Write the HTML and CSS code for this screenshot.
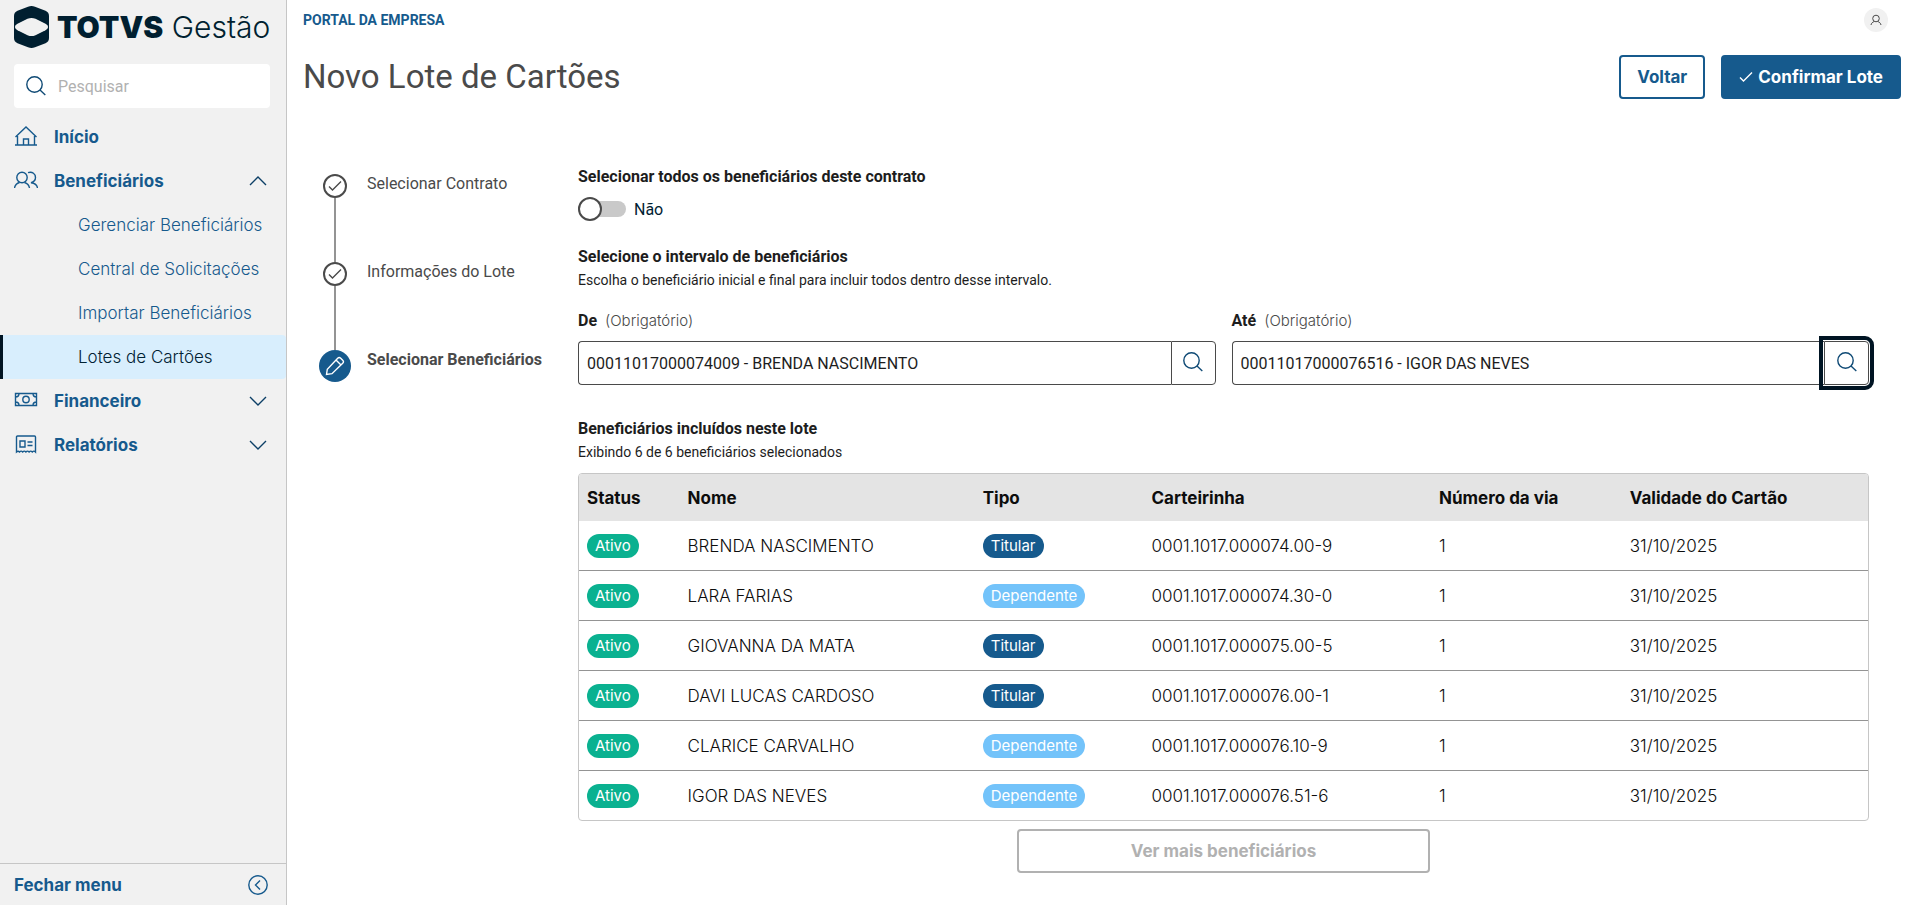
FILE: index.html
```html
<!DOCTYPE html>
<html lang="pt-BR">
<head>
    <meta charset="UTF-8">
    <meta name="viewport" content="width=device-width, initial-scale=1.0">
    <title>Novo Lote de Cartões</title>
    <link rel="stylesheet" href="styles.css">
</head>
<body>
    <aside class="sidebar">
        <a class="logo" href="#">
            <svg width="35" height="42" viewBox="0 0 35 42" aria-hidden="true">
                <path fill="#001f30" d="M14 .8Q17.500-.8 21 .8L31.500 4.800Q35 6.300 35 10V32Q35 35.700 31.500 37.200L21 41.200Q17.500 42.800 14 41.200L3.500 37.200Q0 35.700 0 32V10Q0 6.300 3.500 4.800Z"/>
                <path fill="#f1f1f1" d="M1 21C1 19.500 2 18.600 3.500 17.800L13.500 12.800Q17.500 11 21.500 12.800L31.500 17.800C33 18.600 34 19.500 34 21S33 23.400 31.500 24.200L21.500 29.200Q17.500 31 13.500 29.200L3.500 24.200C2 23.400 1 22.500 1 21Z"/>
            </svg>
            <span class="logo-text"><strong>TOTVS</strong> Gestão</span>
        </a>

        <div class="search">
            <svg class="icon" width="20" height="20" viewBox="0 0 20 20" aria-hidden="true"><circle cx="8.500" cy="8.500" r="7.700"/><path d="M14 14l5.300 5"/></svg>
            <input type="text" placeholder="Pesquisar" aria-label="Pesquisar">
        </div>

        <nav class="menu">
            <a class="menu-item" href="#">
                <svg class="icon" width="24" height="24" viewBox="0 0 24 24" aria-hidden="true"><path d="M1 20h22M3.500 20v-9M20.500 20v-9M1.500 12L12 2l10.500 10M9.500 20v-6h5v6"/></svg>
                <span>Início</span>
            </a>
            <a class="menu-item" href="#">
                <svg class="icon" width="24" height="24" viewBox="0 0 24 24" aria-hidden="true"><circle cx="8" cy="8.500" r="5.200"/><path d="M.5 19c.5-3 2.500-4.700 5-5.500M15.500 19c-.5-3-2.500-4.700-5-5.500M14 3.700c4.500-1.400 7.500 1.400 7.500 4.800 0 3-2 4.500-4.500 5.200 3.500.4 6 2 6.500 5.300"/></svg>
                <span>Beneficiários</span>
                <svg class="icon arrow" width="18" height="10" viewBox="0 0 18 10" aria-hidden="true"><path d="M1 9l8-8 8 8"/></svg>
            </a>
            <a class="submenu-item" href="#">Gerenciar Beneficiários</a>
            <a class="submenu-item" href="#">Central de Solicitações</a>
            <a class="submenu-item" href="#">Importar Beneficiários</a>
            <a class="submenu-item active" href="#">Lotes de Cartões</a>
            <a class="menu-item" href="#">
                <svg class="icon" width="24" height="24" viewBox="0 0 24 24" aria-hidden="true"><path d="M1.500 4.500h21v12h-21zM1.500 8c2 0 3.500-1.500 3.500-3.500M22.500 8c-2 0-3.500-1.500-3.500-3.500M1.500 13c2 0 3.500 1.500 3.500 3.500M22.500 13c-2 0-3.500 1.500-3.500 3.500"/><circle cx="12" cy="10.500" r="3.200"/></svg>
                <span>Financeiro</span>
                <svg class="icon arrow" width="18" height="10" viewBox="0 0 18 10" aria-hidden="true"><path d="M1 1l8 8 8-8"/></svg>
            </a>
            <a class="menu-item" href="#">
                <svg class="icon" width="24" height="24" viewBox="0 0 24 24" aria-hidden="true"><path d="M2.500 19v-15q0-1 1-1h17q1 0 1 1v15q-1.600-1.800-3.200 0-1.600-1.800-3.200 0-1.600-1.800-3.200 0-1.600-1.800-3.200 0-1.600-1.800-3.200 0-1.400-1.500-3 0zM6 8h5v6h-5zM13.500 9h5M13.500 12.500h5"/></svg>
                <span>Relatórios</span>
                <svg class="icon arrow" width="18" height="10" viewBox="0 0 18 10" aria-hidden="true"><path d="M1 1l8 8 8-8"/></svg>
            </a>
        </nav>

        <button class="close-menu" type="button">
            <span>Fechar menu</span>
            <svg class="icon" width="20" height="20" viewBox="0 0 20 20" aria-hidden="true"><circle cx="10" cy="10" r="9.200"/><path d="M12 5.500L7.500 10l4.500 4.500"/></svg>
        </button>
    </aside>

    <main class="page">
        <div class="topbar">
            <span class="portal">PORTAL DA EMPRESA</span>
            <button class="avatar" type="button" aria-label="Perfil">
                <svg class="icon" width="12" height="12" viewBox="0 0 12 12" aria-hidden="true"><circle cx="6" cy="4.500" r="3.300"/><path d="M1 11c.3-1.800 1.700-3 3.300-3.500M11 11c-.3-1.800-1.700-3-3.300-3.500"/></svg>
            </button>
        </div>

        <header class="page-header">
            <h1>Novo Lote de Cartões</h1>
            <div class="actions">
                <button class="btn btn-secondary" type="button">Voltar</button>
                <button class="btn btn-primary" type="button">
                    <svg class="icon" width="14" height="12" viewBox="0 0 14 12" aria-hidden="true"><path d="M1 6.500L4.500 10 13 1.500"/></svg>
                    Confirmar Lote
                </button>
            </div>
        </header>

        <div class="content">
            <ol class="stepper">
                <li class="step">
                    <div class="marker">
                        <span class="circle"><svg class="icon" width="14" height="12" viewBox="0 0 14 12" aria-hidden="true"><path d="M1 6.500L4.500 10 13 1.500"/></svg></span>
                    </div>
                    <span class="step-label">Selecionar Contrato</span>
                </li>
                <li class="step">
                    <div class="marker">
                        <span class="circle"><svg class="icon" width="14" height="12" viewBox="0 0 14 12" aria-hidden="true"><path d="M1 6.500L4.500 10 13 1.500"/></svg></span>
                    </div>
                    <span class="step-label">Informações do Lote</span>
                </li>
                <li class="step current">
                    <div class="marker">
                        <span class="circle"><svg class="icon" width="20" height="20" viewBox="0 0 20 20" aria-hidden="true"><path d="M1.500 18.500l.8-5.300L12.700 2.300q1.500-1.500 3 0l2 2q1.500 1.500 0 3L7 17.700zM11 4l5 5"/></svg></span>
                    </div>
                    <span class="step-label">Selecionar Beneficiários</span>
                </li>
            </ol>

            <div class="form">
                <h2>Selecionar todos os beneficiários deste contrato</h2>
                <label class="switch">
                    <input type="checkbox">
                    <span>Não</span>
                </label>

                <h2>Selecione o intervalo de beneficiários</h2>
                <p>Escolha o beneficiário inicial e final para incluir todos dentro desse intervalo.</p>

                <div class="fields">
                    <div class="field">
                        <label for="de">De <small>(Obrigatório)</small></label>
                        <div class="lookup">
                            <input type="text" id="de" value="00011017000074009 - BRENDA NASCIMENTO">
                            <button type="button" aria-label="Buscar beneficiário inicial">
                                <svg class="icon" width="20" height="20" viewBox="0 0 20 20" aria-hidden="true"><circle cx="8.500" cy="8.500" r="7.700"/><path d="M14 14l5.300 5"/></svg>
                            </button>
                        </div>
                    </div>
                    <div class="field">
                        <label for="ate">Até <small>(Obrigatório)</small></label>
                        <div class="lookup">
                            <input type="text" id="ate" value="00011017000076516 - IGOR DAS NEVES">
                            <button class="focused" type="button" aria-label="Buscar beneficiário final">
                                <svg class="icon" width="20" height="20" viewBox="0 0 20 20" aria-hidden="true"><circle cx="8.500" cy="8.500" r="7.700"/><path d="M14 14l5.300 5"/></svg>
                            </button>
                        </div>
                    </div>
                </div>

                <h2>Beneficiários incluídos neste lote</h2>
                <p>Exibindo 6 de 6 beneficiários selecionados</p>

                <div class="table-box">
                    <table>
                        <colgroup>
                            <col class="col-status">
                            <col class="col-nome">
                            <col class="col-tipo">
                            <col class="col-carteirinha">
                            <col class="col-via">
                            <col class="col-validade">
                        </colgroup>
                        <thead>
                            <tr>
                                <th>Status</th>
                                <th>Nome</th>
                                <th>Tipo</th>
                                <th>Carteirinha</th>
                                <th>Número da via</th>
                                <th>Validade do Cartão</th>
                            </tr>
                        </thead>
                        <tbody>
                            <tr>
                                <td><span class="tag ativo">Ativo</span></td>
                                <td>BRENDA NASCIMENTO</td>
                                <td><span class="tag titular">Titular</span></td>
                                <td>0001.1017.000074.00-9</td>
                                <td>1</td>
                                <td>31/10/2025</td>
                            </tr>
                            <tr>
                                <td><span class="tag ativo">Ativo</span></td>
                                <td>LARA FARIAS</td>
                                <td><span class="tag dependente">Dependente</span></td>
                                <td>0001.1017.000074.30-0</td>
                                <td>1</td>
                                <td>31/10/2025</td>
                            </tr>
                            <tr>
                                <td><span class="tag ativo">Ativo</span></td>
                                <td>GIOVANNA DA MATA</td>
                                <td><span class="tag titular">Titular</span></td>
                                <td>0001.1017.000075.00-5</td>
                                <td>1</td>
                                <td>31/10/2025</td>
                            </tr>
                            <tr>
                                <td><span class="tag ativo">Ativo</span></td>
                                <td>DAVI LUCAS CARDOSO</td>
                                <td><span class="tag titular">Titular</span></td>
                                <td>0001.1017.000076.00-1</td>
                                <td>1</td>
                                <td>31/10/2025</td>
                            </tr>
                            <tr>
                                <td><span class="tag ativo">Ativo</span></td>
                                <td>CLARICE CARVALHO</td>
                                <td><span class="tag dependente">Dependente</span></td>
                                <td>0001.1017.000076.10-9</td>
                                <td>1</td>
                                <td>31/10/2025</td>
                            </tr>
                            <tr>
                                <td><span class="tag ativo">Ativo</span></td>
                                <td>IGOR DAS NEVES</td>
                                <td><span class="tag dependente">Dependente</span></td>
                                <td>0001.1017.000076.51-6</td>
                                <td>1</td>
                                <td>31/10/2025</td>
                            </tr>
                        </tbody>
                    </table>
                </div>

                <button class="btn btn-more" type="button" disabled>Ver mais beneficiários</button>
            </div>
        </div>
    </main>
</body>
</html>
```
FILE: styles.css
```css
*, *::before, *::after {
    margin: 0;
    padding: 0;
    box-sizing: border-box;
}

body {
    display: flex;
    min-height: 100vh;
    font-family: Roboto, sans-serif;
    font-size: 16px;
    color: #1d1d1d;
    background-color: #fff;
}

a {
    text-decoration: none;
}

button, input {
    font-family: inherit;
    font-size: 16px;
}

button {
    cursor: pointer;
}

.icon {
    flex: none;
    fill: none;
    stroke: currentColor;
    stroke-width: 1.4;
}

/* Menu lateral */
.sidebar {
    display: flex;
    flex-direction: column;
    flex: none;
    width: 287px;
    background-color: #f1f1f1;
    border-right: 1px solid #c6c6c6;
    font-family: Inter, sans-serif;
    font-size: 17px;
}

.logo {
    display: flex;
    align-items: center;
    gap: 8px;
    padding: 6px 14px 0;
    color: #001f30;
}

.logo-text {
    font-size: 30px;
    line-height: 42px;
    font-weight: 300;
    white-space: nowrap;
}

.logo-text strong {
    font-weight: 900;
}

.search {
    display: flex;
    align-items: center;
    gap: 12px;
    height: 44px;
    margin: 16px 16px 7px 14px;
    padding: 0 12px;
    background-color: #fff;
    border-radius: 4px;
    color: #0f4a75;
}

.search input {
    flex: 1;
    min-width: 0;
    border: none;
    outline: none;
    font-family: Roboto, sans-serif;
}

.search input::placeholder {
    color: #b1b1b1;
}

.menu {
    flex: 1;
}

.menu-item {
    display: flex;
    align-items: center;
    gap: 16px;
    height: 44px;
    padding: 0 19px 0 14px;
    color: #165a8d;
    font-weight: 700;
}

.menu-item .arrow {
    margin-left: auto;
    color: #0c3f66;
}

.submenu-item {
    display: block;
    height: 44px;
    padding-left: 78px;
    line-height: 44px;
    font-weight: 300;
    color: #165a8d;
}

.submenu-item.active {
    padding-left: 75px;
    border-left: 3px solid #001423;
    border-radius: 0 4px 4px 0;
    background-color: #d8eefd;
    color: #002233;
}

.close-menu {
    display: flex;
    align-items: center;
    justify-content: space-between;
    height: 42px;
    padding: 0 18px 0 14px;
    border: none;
    border-top: 1px solid #c6c6c6;
    background: none;
    color: #165a8d;
    font-size: 17px;
    font-weight: 700;
}

/* Cabeçalho */
.page {
    flex: 1;
    min-width: 0;
    padding: 8px 14px 16px 16px;
}

.topbar {
    display: flex;
    align-items: center;
    justify-content: space-between;
    height: 24px;
    padding-right: 13px;
}

.portal {
    font-size: 14px;
    font-weight: 700;
    color: #165a8d;
}

.avatar {
    display: flex;
    align-items: center;
    justify-content: center;
    width: 24px;
    height: 24px;
    border: none;
    border-radius: 50%;
    background-color: #f1f1f1;
    color: #4a4a4a;
}

.avatar .icon {
    stroke-width: 1;
}

.page-header {
    display: flex;
    align-items: center;
    justify-content: space-between;
    margin-top: 23px;
}

h1 {
    font-size: 33px;
    line-height: 44px;
    font-weight: 400;
    color: #4a4a4a;
}

.actions {
    display: flex;
    gap: 16px;
}

.btn {
    height: 44px;
    padding: 0 16px;
    border: 2px solid #165a8d;
    border-radius: 4px;
    font-family: Inter, sans-serif;
    font-size: 17px;
    font-weight: 700;
}

.btn-secondary {
    background-color: #fff;
    color: #165a8d;
}

.btn-primary {
    display: flex;
    align-items: center;
    gap: 5px;
    background-color: #165a8d;
    color: #fff;
}

.content {
    display: flex;
    margin-top: 66px;
}

/* Etapas */
.stepper {
    flex: none;
    width: 275px;
    padding: 9px 0 0 16px;
    list-style: none;
    color: #4a4a4a;
}

.step {
    display: flex;
    gap: 16px;
    min-height: 88px;
}

.marker {
    display: flex;
    flex-direction: column;
    align-items: center;
    width: 32px;
}

.marker::after {
    content: "";
    flex: 1;
    width: 2px;
    background-color: #949494;
}

.circle {
    display: flex;
    align-items: center;
    justify-content: center;
    width: 24px;
    height: 24px;
    border: 2px solid #4a4a4a;
    border-radius: 50%;
}

.step-label {
    line-height: 20px;
}

.current .marker::after {
    display: none;
}

.current .circle {
    width: 32px;
    height: 32px;
    border: none;
    background-color: #165a8d;
    color: #fff;
}

.current .step-label {
    font-weight: 700;
}

/* Formulário */
.form {
    flex: 1;
    min-width: 0;
    margin-right: 32px;
}

h2 {
    font-size: 16px;
    line-height: 24px;
    font-weight: 700;
}

.form p {
    font-size: 14px;
    line-height: 22px;
}

.switch {
    display: flex;
    align-items: center;
    gap: 8px;
    height: 24px;
    margin: 8px 0 24px;
    color: #002233;
}

.switch input {
    position: relative;
    appearance: none;
    width: 48px;
    height: 16px;
    border-radius: 8px;
    background-color: #c9c9c9;
}

.switch input::before {
    content: "";
    position: absolute;
    top: -4px;
    left: 0;
    width: 24px;
    height: 24px;
    border: 2px solid #4a4a4a;
    border-radius: 50%;
    background-color: #fff;
}

.switch input:checked::before {
    left: 24px;
}

.fields {
    display: flex;
    gap: 16px;
    margin: 18px 0 32px;
}

.field {
    flex: 1;
    min-width: 0;
}

.field label {
    display: block;
    margin-bottom: 8px;
    line-height: 24px;
    font-weight: 700;
}

.field small {
    margin-left: 4px;
    font-family: Inter, sans-serif;
    font-size: 15px;
    font-weight: 300;
    color: #4a4a4a;
}

.lookup {
    display: flex;
    height: 44px;
}

.lookup input {
    flex: 1;
    min-width: 0;
    padding: 0 8px;
    border: 1px solid #4a4a4a;
    border-right: none;
    border-radius: 4px 0 0 4px;
    outline: none;
    color: #1d1d1d;
}

.lookup button {
    display: flex;
    align-items: center;
    justify-content: center;
    width: 45px;
    padding-bottom: 2px;
    border: 1px solid #4a4a4a;
    border-radius: 0 4px 4px 0;
    background-color: #fff;
    color: #0f4a75;
}

.lookup button.focused {
    outline: 4px solid #001423;
    outline-offset: 1px;
}

/* Tabela */
.table-box {
    margin: 10px 0 8px;
    border: 1px solid #c6c6c6;
    border-radius: 4px;
    overflow: hidden;
}

table {
    width: 100%;
    table-layout: fixed;
    border-collapse: separate;
    border-spacing: 0;
    font-family: Inter, sans-serif;
    font-size: 17px;
    color: #0d0d0d;
}

.col-status {
    width: 7.8%;
}

.col-nome {
    width: 22.9%;
}

.col-tipo {
    width: 13.1%;
}

.col-carteirinha {
    width: 22.3%;
}

.col-via {
    width: 14.8%;
}

.col-validade {
    width: 19.1%;
}

th, td {
    padding: 0 8px;
    text-align: left;
    vertical-align: middle;
    white-space: nowrap;
}

th {
    height: 47px;
    background-color: #e4e4e4;
    font-weight: 700;
}

td {
    height: 50px;
    border-bottom: 1px solid #949494;
    font-weight: 300;
}

tr:last-child td {
    height: 49px;
    border-bottom: none;
}

.tag {
    display: inline-block;
    padding: 0 8px;
    border-radius: 12px;
    font-size: 15px;
    line-height: 24px;
    font-weight: 400;
    vertical-align: middle;
    color: #fff;
}

.ativo {
    background-color: #0ab190;
}

.titular {
    background-color: #165a8d;
}

.dependente {
    background-color: #73c3fa;
}

.btn-more {
    display: block;
    width: 32%;
    margin: 0 auto;
    border-color: #b1b1b1;
    background-color: #fff;
    color: #b1b1b1;
    cursor: default;
}
```
